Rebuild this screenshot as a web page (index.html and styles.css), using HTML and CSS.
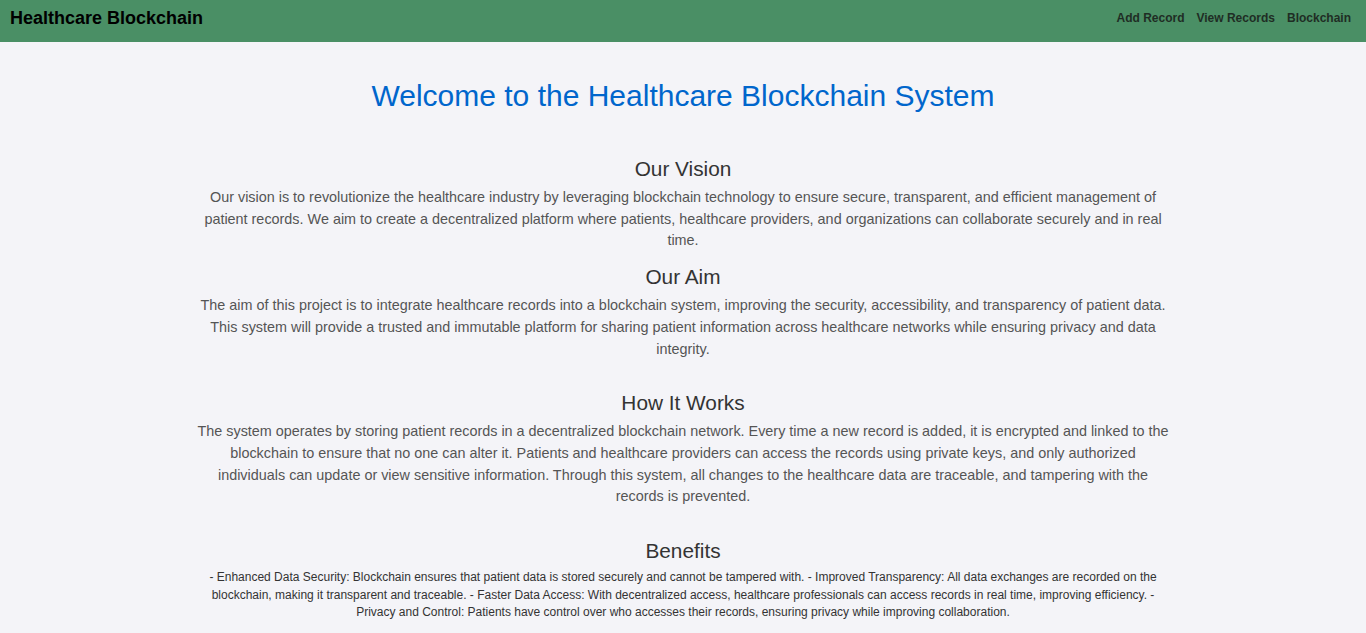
FILE: index.html
```html
<!DOCTYPE html>
<html lang="en">
<head>
<meta charset="utf-8">
<title>Healthcare Blockchain</title>
<link rel="stylesheet" href="styles.css">
</head>
<body>
<header class="navbar">
  <div class="brand">Healthcare Blockchain</div>
  <nav class="nav-links">
    <a href="#" class="nav-link">Add Record</a>
    <a href="#" class="nav-link">View Records</a>
    <a href="#" class="nav-link">Blockchain</a>
  </nav>
</header>
<main class="content">
  <h1 class="title">Welcome to the Healthcare Blockchain System</h1>
  <section class="section">
    <div class="block">
      <h2 class="heading">Our Vision</h2>
      <p class="text">Our vision is to revolutionize the healthcare industry by leveraging blockchain technology to ensure secure, transparent, and efficient management of patient records. We aim to create a decentralized platform where patients, healthcare providers, and organizations can collaborate securely and in real time.</p>
    </div>
    <div class="block">
      <h2 class="heading">Our Aim</h2>
      <p class="text">The aim of this project is to integrate healthcare records into a blockchain system, improving the security, accessibility, and transparency of patient data. This system will provide a trusted and immutable platform for sharing patient information across healthcare networks while ensuring privacy and data integrity.</p>
    </div>
  </section>
  <section class="section">
    <div class="block">
      <h2 class="heading">How It Works</h2>
      <p class="text">The system operates by storing patient records in a decentralized blockchain network. Every time a new record is added, it is encrypted and linked to the blockchain to ensure that no one can alter it. Patients and healthcare providers can access the records using private keys, and only authorized individuals can update or view sensitive information. Through this system, all changes to the healthcare data are traceable, and tampering with the records is prevented.</p>
    </div>
  </section>
  <section class="section">
    <div class="block">
      <h2 class="heading">Benefits</h2>
      <p class="text small">- Enhanced Data Security: Blockchain ensures that patient data is stored securely and cannot be tampered with. - Improved Transparency: All data exchanges are recorded on the blockchain, making it transparent and traceable. - Faster Data Access: With decentralized access, healthcare professionals can access records in real time, improving efficiency. - Privacy and Control: Patients have control over who accesses their records, ensuring privacy while improving collaboration.</p>
    </div>
  </section>
</main>
</body>
</html>
```
FILE: styles.css
```css
html, body {
  margin: 0;
  padding: 0;
}
body {
  background: #f4f4f8;
  font-family: "Liberation Sans", Arial, sans-serif;
  color: #333;
}
.navbar {
  box-sizing: border-box;
  height: 42px;
  background: #4a8f65;
  display: flex;
  align-items: center;
  justify-content: space-between;
  padding: 0 15px 6px 10px;
}
.brand {
  font-size: 18px;
  line-height: 21px;
  font-weight: bold;
  color: #000;
}
.nav-links {
  display: flex;
  gap: 12px;
}
.nav-link {
  font-size: 12px;
  line-height: 14px;
  font-weight: bold;
  color: #1f2d24;
  text-decoration: none;
}
.content {
  max-width: 972px;
  margin: 0 auto;
  text-align: center;
}
.title {
  margin: 37px 0 44px;
  font-size: 30px;
  line-height: 34px;
  font-weight: normal;
  color: #0066cc;
}
.section {
  margin-bottom: 31px;
}
.block + .block {
  margin-top: 13px;
}
.heading {
  margin: 0 0 6px;
  font-size: 20.8px;
  line-height: 24px;
  font-weight: normal;
  color: #333;
}
.text {
  margin: 0;
  font-size: 14.4px;
  line-height: 21.7px;
  color: #555;
}
.text.small {
  font-size: 12px;
  line-height: 17.5px;
  color: #333;
}
```
